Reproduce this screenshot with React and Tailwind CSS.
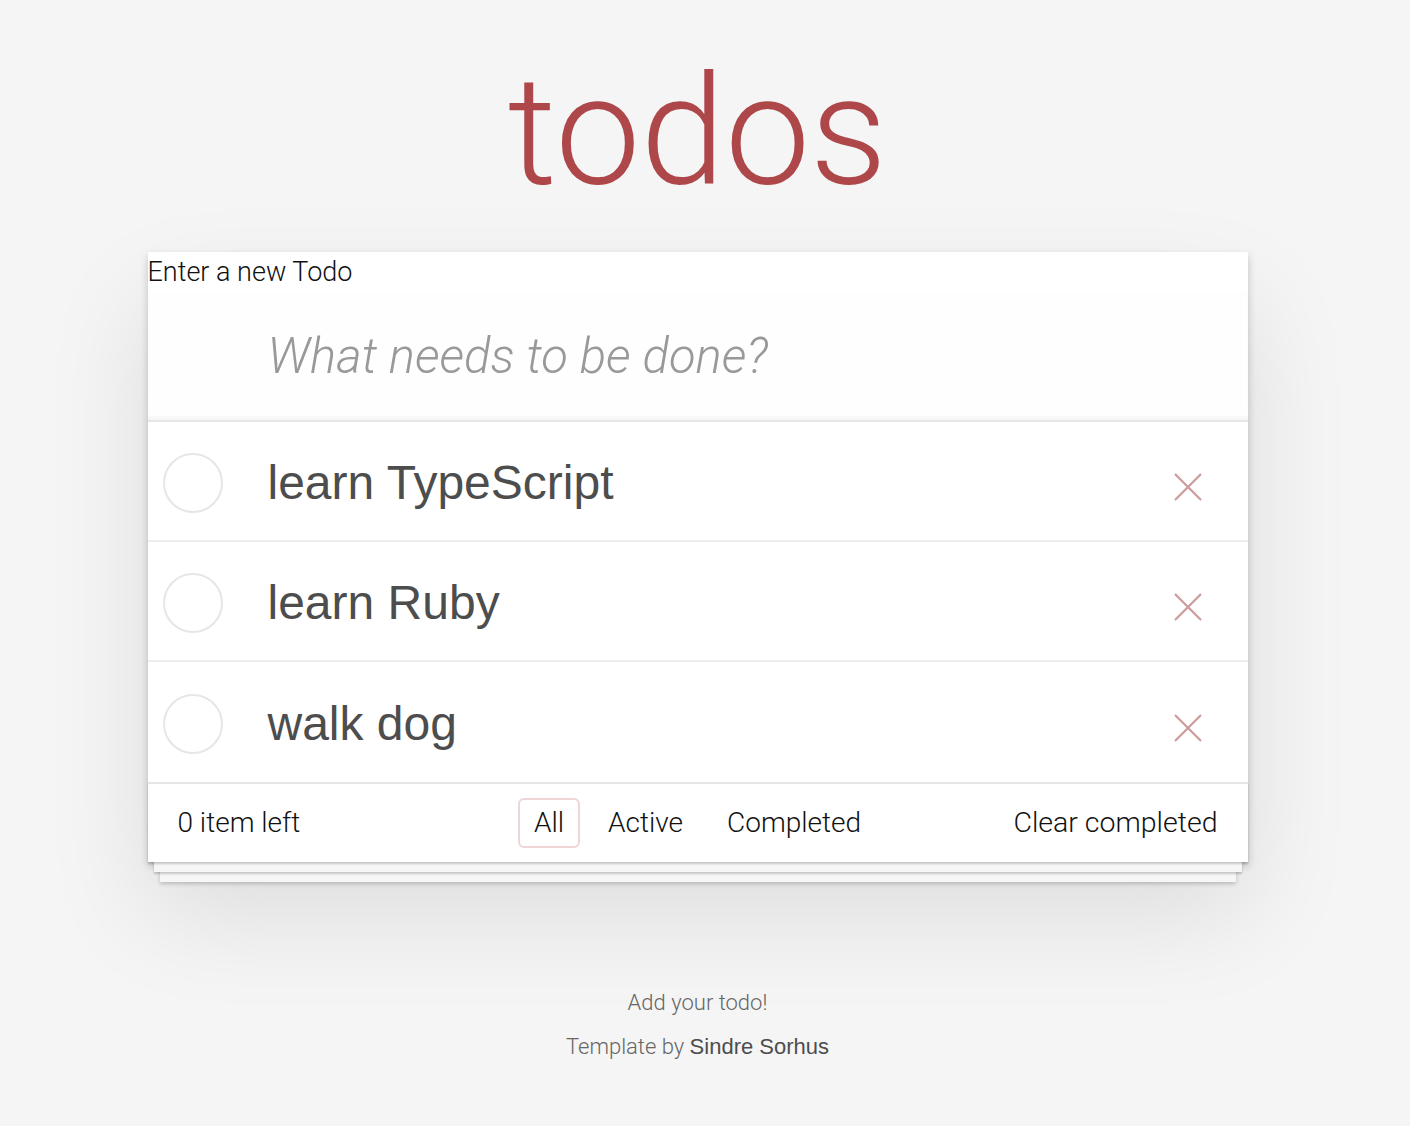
import React, { useState } from "react";

const light = "font-['Roboto',Arial,sans-serif] font-light";
const regular = "font-['Liberation_Sans',Arial,sans-serif] font-normal";

const initialTodos = [
  { id: 1, title: "learn TypeScript" },
  { id: 2, title: "learn Ruby" },
  { id: 3, title: "walk dog" },
];

// empty circle toggle
function Toggle() {
  return (
    <svg width="60" height="60" viewBox="0 0 60 60">
      <circle cx="30" cy="30" r="29" fill="none" stroke="#e6e6e6" strokeWidth="2" />
    </svg>
  );
}

function Destroy() {
  return (
    <svg width="28" height="28" viewBox="0 0 28 28">
      <path d="M1 1 L27 27 M27 1 L1 27" stroke="#cc9a9a" strokeWidth="2.2" fill="none" />
    </svg>
  );
}

function TodoItem({ title }) {
  return (
    <li className="flex items-center h-[120px] pt-[4px] border-b-2 border-[#ededed] last:border-b-0">
      <div className="w-[120px] pl-[15px] flex items-center">
        <Toggle />
      </div>
      <label className={`flex-1 text-[48px] leading-[58px] text-[#4d4d4d] ${regular}`}>{title}</label>
      <button className="w-[80px] mr-[20px] mt-[8px] flex items-center justify-center">
        <Destroy />
      </button>
    </li>
  );
}

export default function App() {
  const [todos] = useState(initialTodos);
  const [filter, setFilter] = useState("All");

  return (
    <div className={`min-h-[1126px] w-full bg-[#f5f5f5] text-[#111] ${light}`}>
      <div className="w-[1395px]">
        <div className="w-[1100px] mx-auto pt-[52px] pb-[40px]">
          <h1 className="h-[160px] leading-[160px] mb-[40px] text-center text-[152px] font-light text-[#ae474a]">
            todos
          </h1>

          <section className="bg-white shadow-[0_4px_8px_0_rgba(0,0,0,0.2),0_50px_100px_0_rgba(0,0,0,0.1)]">
            {/* new todo */}
            <label className="block h-[40px] leading-[40px] text-[27px] text-[#111]">Enter a new Todo</label>
            <input
              className="block w-full h-[128px] pl-[120px] pr-[32px] text-[49px] italic font-light bg-[rgba(0,0,0,0.003)] shadow-[inset_0_-4px_2px_rgba(0,0,0,0.03)] outline-none placeholder:text-[#999]"
              placeholder="What needs to be done?"
            />

            {/* list */}
            <ul className="border-t-2 border-[#e6e6e6]">
              {todos.map((t) => (
                <TodoItem key={t.id} title={t.title} />
              ))}
            </ul>

            {/* footer */}
            <footer className="grid grid-cols-[1fr_auto_1fr] items-center h-[80px] px-[30px] border-t-2 border-[#e6e6e6] text-[28px] text-[#111] shadow-[0_2px_2px_rgba(0,0,0,0.2),0_16px_0_-6px_#f6f6f6,0_18px_2px_-6px_rgba(0,0,0,0.2),0_32px_0_-12px_#f6f6f6,0_34px_4px_-12px_rgba(0,0,0,0.2)]">
              <span>0 item left</span>
              <ul className="flex">
                {["All", "Active", "Completed"].map((f) => (
                  <li key={f} className="mx-[6px]">
                    <a
                      onClick={() => setFilter(f)}
                      className={`block px-[14px] py-[6px] leading-[34px] rounded-[6px] border-2 cursor-pointer ${
                        filter === f ? "border-[rgba(175,47,47,0.2)]" : "border-transparent"
                      }`}
                    >
                      {f}
                    </a>
                  </li>
                ))}
              </ul>
              <button className="justify-self-end text-[28.5px]">Clear completed</button>
            </footer>
          </section>

          <footer className="mt-[130px] text-center text-[22px] text-[#666]">
            <p className="leading-none">Add your todo!</p>
            <p className="leading-none mt-[22px]">
              Template by <a className={`text-[#4d4d4d] ${regular}`}>Sindre Sorhus</a>
            </p>
          </footer>
        </div>
      </div>
    </div>
  );
}
